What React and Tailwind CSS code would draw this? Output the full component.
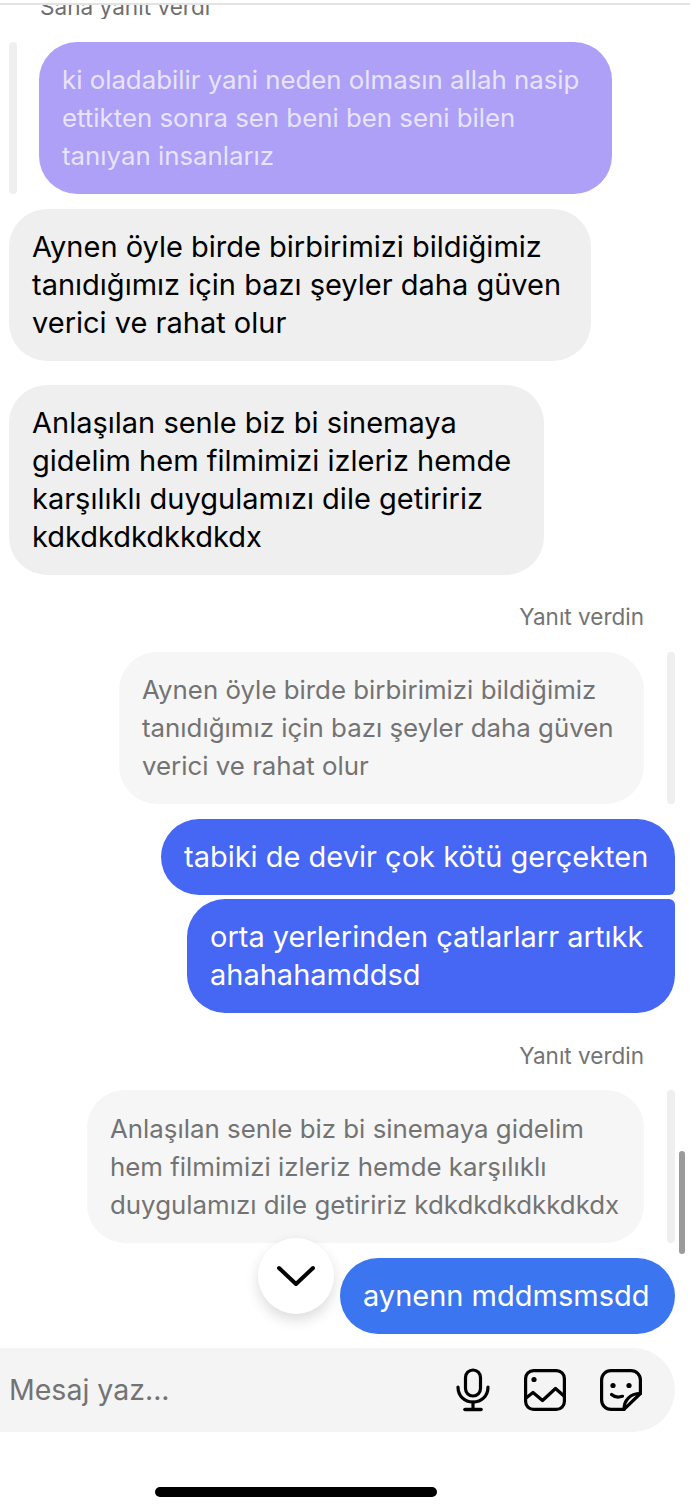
const Lines = ({ lines }) => (
  <>
    {lines.map((l) => (
      <span key={l} className="block whitespace-nowrap">{l}</span>
    ))}
  </>
);

const Bubble = ({ lines, className }) => (
  <div className={`px-[23px] py-[19px] leading-[38px] ${className}`}>
    <Lines lines={lines} />
  </div>
);

const Mic = () => (
  <svg width="34" height="44" viewBox="0 0 34 44" fill="none" stroke="#000" strokeWidth="3.2" strokeLinecap="round" strokeLinejoin="round">
    <rect x="9.5" y="2" width="15" height="26" rx="7.5" />
    <path d="M2 19c0 9 6.5 15 15 15s15-6 15-15" />
    <path d="M17 34v7" />
    <path d="M9 41.5h16" strokeWidth="3.6" />
  </svg>
);

const ImageIcon = () => (
  <svg width="42" height="42" viewBox="0 0 42 42" fill="none" stroke="#000" strokeWidth="3.2" strokeLinecap="round" strokeLinejoin="round">
    <rect x="1.6" y="1.6" width="38.8" height="38.8" rx="8" />
    <circle cx="10" cy="10.5" r="2.6" fill="#000" stroke="none" />
    <path d="M2 29l7-5.500 9.500 8 13-12 8.500 7.500" />
  </svg>
);

const Sticker = () => (
  <svg width="42" height="42" viewBox="0 0 42 42" fill="none" stroke="#000" strokeWidth="3.2" strokeLinecap="round" strokeLinejoin="round">
    <path d="M24 40.4H11c-5.300 0-9.400-4.100-9.400-9.400V11c0-5.300 4.100-9.400 9.400-9.400h20c5.300 0 9.400 4.100 9.400 9.400v13.500z" />
    <path d="M24 40.4c0-9 6-15.900 16.400-15.900" />
    <circle cx="13" cy="16.500" r="2.600" fill="#000" stroke="none" />
    <circle cx="29" cy="16.500" r="2.600" fill="#000" stroke="none" />
    <path d="M11.500 25.500c2.600 2.400 6.500 3.200 11 1.800" />
  </svg>
);

export default function App() {
  return (
    <div className="relative w-[690px] h-[1512px] overflow-hidden bg-white text-black font-['Inter','Liberation_Sans',sans-serif]">
      <div className="h-[5px] border-b-2 border-[#e3e3e3]" />

      <div className="h-[14px] overflow-hidden pl-[40px]">
        <div className="text-[22.6px] leading-[26px] text-[#6f6f6f] -mt-[11px]">Sana yanıt verdi</div>
      </div>

      <div className="mt-[23px] flex pl-[9px] gap-[22px]">
        <div className="w-[8px] rounded-full bg-[#efefef]" />
        <Bubble
          className="w-[573px] rounded-[38px] bg-[#ada0f6] text-[#e8e4fd] text-[25.8px]"
          lines={["ki oladabilir yani neden olmasın allah nasip", "ettikten sonra sen beni ben seni bilen", "tanıyan insanlarız"]}
        />
      </div>

      <Bubble
        className="mt-[15px] ml-[9px] w-[582px] rounded-[38px] bg-[#efefef] text-[29px]"
        lines={["Aynen öyle birde birbirimizi bildiğimiz", "tanıdığımız için bazı şeyler daha güven", "verici ve rahat olur"]}
      />

      <Bubble
        className="mt-[24px] ml-[9px] w-[535px] rounded-[38px] bg-[#efefef] text-[29px]"
        lines={["Anlaşılan senle biz bi sinemaya", "gidelim hem filmimizi izleriz hemde", "karşılıklı duygulamızı dile getiririz", "kdkdkdkdkkdkdx"]}
      />

      <div className="mt-[29px] pr-[46px] text-right text-[22.5px] leading-[26px] text-[#737373]">Yanıt verdin</div>

      <div className="mt-[22px] flex justify-end pr-[15px] gap-[23px]">
        <Bubble
          className="w-[525px] rounded-[38px] bg-[#f6f6f6] text-[#737373] text-[25.85px]"
          lines={["Aynen öyle birde birbirimizi bildiğimiz", "tanıdığımız için bazı şeyler daha güven", "verici ve rahat olur"]}
        />
        <div className="w-[8px] rounded-full bg-[#efefef]" />
      </div>

      <div className="mt-[15px] pr-[15px] flex flex-col items-end gap-[4px] text-white text-[29px]">
        <Bubble
          className="w-[514px] rounded-l-[38px] rounded-tr-[38px] rounded-br-[6px] bg-[#4666f4]"
          lines={["tabiki de devir çok kötü gerçekten"]}
        />
        <Bubble
          className="w-[488px] rounded-l-[38px] rounded-br-[38px] rounded-tr-[6px] bg-[#4666f4]"
          lines={["orta yerlerinden çatlarlarr artıkk", "ahahahamddsd"]}
        />
      </div>

      <div className="mt-[30px] pr-[46px] text-right text-[22.5px] leading-[26px] text-[#737373]">Yanıt verdin</div>

      <div className="mt-[21px] flex justify-end pr-[15px] gap-[23px]">
        <Bubble
          className="w-[557px] pt-[20px] rounded-[38px] bg-[#f6f6f6] text-[#737373] text-[25.85px]"
          lines={["Anlaşılan senle biz bi sinemaya gidelim", "hem filmimizi izleriz hemde karşılıklı", "duygulamızı dile getiririz kdkdkdkdkkdkdx"]}
        />
        <div className="w-[8px] rounded-full bg-[#efefef]" />
      </div>

      <div className="mt-[15px] pr-[15px] flex justify-end text-white text-[29px]">
        <Bubble className="w-[335px] rounded-[38px] bg-[#3b76f0]" lines={["aynenn mddmsmsdd"]} />
      </div>

      <div className="mt-[14px] mr-[15px] h-[84px] rounded-r-[42px] bg-[#f4f4f5] flex items-center pl-[9px]">
        <span className="text-[28.5px] text-[#737373]">Mesaj yaz...</span>
        <div className="ml-auto pr-[33px] flex items-center gap-[34px]">
          <Mic />
          <ImageIcon />
          <Sticker />
        </div>
      </div>

      <div className="mt-[55px] ml-[155px] w-[282px] h-[10px] rounded-full bg-black" />

      <div className="absolute left-[679px] top-[1151px] w-[6px] h-[103px] rounded-full bg-[#9b9b9b]" />
      <button className="absolute left-[258px] top-[1238px] w-[76px] h-[76px] rounded-full bg-white shadow-[0_6px_14px_rgba(0,0,0,0.14)] flex items-center justify-center">
        <svg width="40" height="24" viewBox="0 0 40 24" fill="none" stroke="#000" strokeWidth="4" strokeLinecap="round" strokeLinejoin="round">
          <path d="M3 4l17 16L37 4" />
        </svg>
      </button>
    </div>
  );
}
